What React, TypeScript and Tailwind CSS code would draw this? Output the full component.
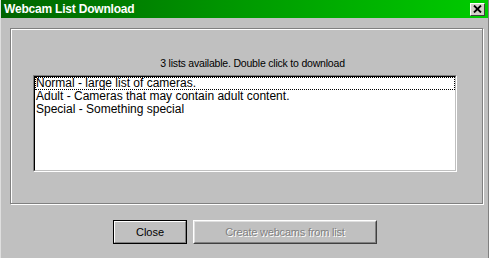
const lists = [
  "Normal - large list of cameras.",
  "Adult - Cameras that may contain adult content.",
  "Special - Something special",
];

export default function App() {
  return (
    <div className="w-[489px] h-[258px] bg-[#c0c0c0] flex flex-col border-l border-l-[#dfdfdf] border-r border-r-[#808080] font-['Liberation_Sans',Arial,sans-serif] text-[11px] text-black overflow-hidden">
      {/* title bar */}
      <div className="h-[18px] flex items-center justify-between bg-gradient-to-r from-[#006400] via-[#009a00] to-[#00cc00] pl-[3px] pr-[3px]">
        <span className="text-white font-bold text-[12px] leading-none tracking-[-0.2px]">
          Webcam List Download
        </span>
        <button className="w-[15px] h-[13px] bg-[#d4d0c8] border border-t-white border-l-white border-b-[#404040] border-r-[#404040] flex items-center justify-center">
          <svg width="9" height="8" viewBox="0 0 9 8">
            <path d="M1 0.5 L8 7.5 M8 0.5 L1 7.5" stroke="#000" strokeWidth="1.8" />
          </svg>
        </button>
      </div>

      {/* group box */}
      <div className="mt-[10px] ml-[9px] mr-[5px] h-[176px] border border-[#808080] shadow-[inset_1px_1px_0_#fff,1px_1px_0_#fff] flex flex-col items-center">
        <p className="mt-[28px] ml-[12px] leading-[13px] text-[10.5px] tracking-[-0.2px]">
          3 lists available. Double click to download
        </p>
        <div className="mt-[5px] ml-[-3px] w-[424px] h-[97px] bg-white border border-t-[#808080] border-l-[#808080] border-b-white border-r-white">
          <div className="h-full border border-t-black border-l-black border-b-[#c0c0c0] border-r-[#c0c0c0] text-[12px] text-black">
            {lists.map((item, i) => (
              <div
                key={item}
                className={
                  i === 0
                    ? "h-[13px] leading-[11px] border border-dotted border-black"
                    : "h-[13px] leading-[13px] pl-[1px]"
                }
              >
                {item}
              </div>
            ))}
          </div>
        </div>
      </div>

      {/* buttons */}
      <div className="mt-[16px] flex gap-[6px] pl-[112px]">
        <button className="w-[74px] h-[24px] border border-black">
          <div className="h-full border border-t-white border-l-white border-b-[#808080] border-r-[#808080] flex items-center justify-center text-[11px]">
            Close
          </div>
        </button>
        <button
          disabled
          className="w-[184px] h-[24px] border border-t-white border-l-white border-b-[#404040] border-r-[#404040]"
        >
          <div className="h-full border border-t-[#dfdfdf] border-l-[#dfdfdf] border-b-[#808080] border-r-[#808080] flex items-center justify-center text-[11px] tracking-[-0.2px] text-[#808080] [text-shadow:1px_1px_0_#fff]">
            Create webcams from list
          </div>
        </button>
      </div>
    </div>
  );
}
